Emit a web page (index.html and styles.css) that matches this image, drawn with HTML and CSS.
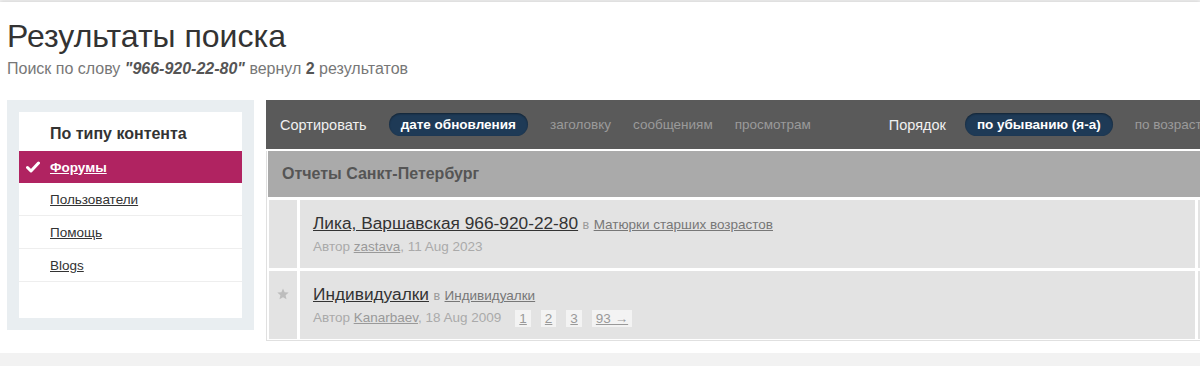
FILE: index.html
```html
<!DOCTYPE html>
<html lang="ru">
<head>
<meta charset="utf-8">
<title>Результаты поиска</title>
<link rel="stylesheet" href="styles.css">
</head>
<body>
<div class="page">
  <header class="head">
    <h1 class="title">Результаты поиска</h1>
    <p class="subtitle">Поиск по слову <em class="query">"966-920-22-80"</em> вернул <b class="count">2</b> результатов</p>
  </header>
  <div class="layout">
    <aside class="sidebar">
      <div class="filter">
        <h3 class="filter-title">По типу контента</h3>
        <ul class="filter-list">
          <li class="filter-item active">
            <svg class="check" viewBox="0 0 14 12" width="14" height="12"><polyline points="1.5,6.5 5,10 12.5,2" fill="none" stroke="#fff" stroke-width="3" stroke-linecap="round" stroke-linejoin="round"/></svg>
            <a href="#" class="filter-link">Форумы</a>
          </li>
          <li class="filter-item"><a href="#" class="filter-link">Пользователи</a></li>
          <li class="filter-item"><a href="#" class="filter-link">Помощь</a></li>
          <li class="filter-item"><a href="#" class="filter-link">Blogs</a></li>
        </ul>
      </div>
    </aside>
    <main class="main">
      <div class="sortbar">
        <span class="sort-label">Сортировать</span>
        <span class="pill">дате обновления</span>
        <a href="#" class="sort-opt">заголовку</a>
        <a href="#" class="sort-opt">сообщениям</a>
        <a href="#" class="sort-opt">просмотрам</a>
        <span class="sort-label order">Порядок</span>
        <span class="pill">по убыванию (я-а)</span>
        <a href="#" class="sort-opt">по возрастанию (а-я)</a>
      </div>
      <div class="results">
        <div class="section-head">Отчеты Санкт-Петербург</div>
        <div class="row">
          <div class="cell-icon"></div>
          <div class="cell-main">
            <div class="topic-line"><a href="#" class="topic">Лика, Варшавская 966-920-22-80</a> <span class="in">в</span> <a href="#" class="forum">Матюрки старших возрастов</a></div>
            <div class="meta">Автор <a href="#" class="author">zastava</a>, 11 Aug 2023</div>
          </div>
          <div class="cell-stats"></div>
        </div>
        <div class="row">
          <div class="cell-icon">
            <svg class="star" viewBox="0 0 12 12" width="12" height="12"><polygon points="6,0.5 7.6,4.3 11.7,4.6 8.6,7.3 9.5,11.3 6,9.2 2.5,11.3 3.4,7.3 0.3,4.6 4.4,4.3" fill="#bdbdbd"/></svg>
          </div>
          <div class="cell-main">
            <div class="topic-line"><a href="#" class="topic">Индивидуалки</a> <span class="in">в</span> <a href="#" class="forum">Индивидуалки</a></div>
            <div class="meta">Автор <a href="#" class="author">Kanarbaev</a>, 18 Aug 2009<span class="pages"><a href="#" class="pg">1</a><a href="#" class="pg">2</a><a href="#" class="pg">3</a><a href="#" class="pg">93 →</a></span></div>
          </div>
          <div class="cell-stats"></div>
        </div>
      </div>
    </main>
  </div>
</div>
</body>
</html>
```

FILE: styles.css
```css
* { box-sizing: border-box; }
html, body { margin: 0; padding: 0; }
body {
  background: #f2f2f2;
  font-family: "Liberation Sans", Arial, sans-serif;
  color: #333;
  overflow: hidden;
}
.page {
  margin-top: 2px;
  background: #fff;
  padding: 16px 0 12px 7px;
  box-shadow: 0 0 5px rgba(0,0,0,0.18);
  overflow: hidden;
}
.title {
  margin: 0;
  font-size: 32px;
  line-height: 36px;
  font-weight: normal;
  color: #333;
}
.subtitle {
  margin: 5px 0 0;
  font-size: 16px;
  line-height: 20px;
  color: #777;
}
.query { font-weight: bold; color: #555; }
.count { color: #555; }
.layout {
  display: flex;
  gap: 12px;
  margin-top: 21px;
  align-items: flex-start;
}
.sidebar {
  flex: 0 0 247px;
  background: #e9eef1;
  padding: 12px;
  height: 230px;
}
.filter {
  background: #fff;
  height: 206px;
}
.filter-title {
  margin: 0;
  padding: 12px 0 7px 31px;
  font-size: 16px;
  line-height: 20px;
  color: #333;
}
.filter-list { list-style: none; margin: 0; padding: 0; }
.filter-item {
  display: flex;
  align-items: center;
  height: 33px;
  padding-left: 31px;
  border-bottom: 1px solid #eeeeee;
  font-size: 13.5px;
}
.filter-link { color: #333; text-decoration: underline; }
.filter-item.active {
  height: 32px;
  border-bottom: none;
  background: #b02361;
  padding-left: 7px;
}
.check { margin-right: 10px; }
.filter-item.active .filter-link { color: #fff; font-weight: bold; }
.main {
  flex: 0 0 1000px;
}
.sortbar {
  height: 49px;
  background: #5a5a5a;
  display: flex;
  align-items: center;
  padding-left: 14px;
  gap: 22px;
  white-space: nowrap;
}
.sort-label { color: #f0f0f0; font-size: 14.5px; }
.sort-label.order { margin-left: 56px; margin-right: -3px; }
.pill {
  background: #1e3a56;
  color: #fff;
  font-weight: bold;
  font-size: 13.5px;
  line-height: 23px;
  height: 23px;
  padding: 0 12px;
  border-radius: 12px;
  box-shadow: inset 0 1px 2px rgba(0,0,0,0.4);
}
.sort-opt { color: #9a9a9a; font-size: 13.5px; text-decoration: none; }
.results {
  margin-top: 2px;
  border-left: 1px solid #e0e0e0;
  border-bottom: 1px solid #e0e0e0;
  padding: 0 0 1px 1px;
  background: #fff;
  display: flex;
  flex-direction: column;
  gap: 3px;
}
.section-head {
  height: 46px;
  background: #aaaaaa;
  color: #555;
  font-weight: bold;
  font-size: 16px;
  display: flex;
  align-items: center;
  padding-left: 14px;
}
.row {
  display: flex;
  gap: 3px;
  height: 68px;
  padding-left: 1px;
}
.cell-icon {
  flex: 0 0 28px;
  background: #e3e3e3;
  display: flex;
  justify-content: center;
  padding-top: 17px;
}
.cell-main {
  flex: 0 0 895px;
  background: #e3e3e3;
  padding: 13px 0 0 13px;
}
.cell-stats { flex: 1; background: #e3e3e3; }
.topic-line { line-height: 20px; white-space: nowrap; }
.topic { font-size: 17.3px; color: #333; text-decoration: underline; }
.in { font-size: 12.5px; color: #999; }
.forum { font-size: 13.5px; color: #777; text-decoration: underline; }
.meta {
  margin-top: 3px;
  font-size: 13.5px;
  line-height: 18px;
  color: #aaa;
  white-space: nowrap;
}
.author { color: #999; text-decoration: underline; }
.pages { display: inline-flex; gap: 10px; margin-left: 14px; vertical-align: middle; }
.pg {
  display: inline-block;
  background: #f3f3f3;
  color: #999;
  text-decoration: underline;
  padding: 0 4px;
  line-height: 17px;
  font-size: 13.5px;
}
```
